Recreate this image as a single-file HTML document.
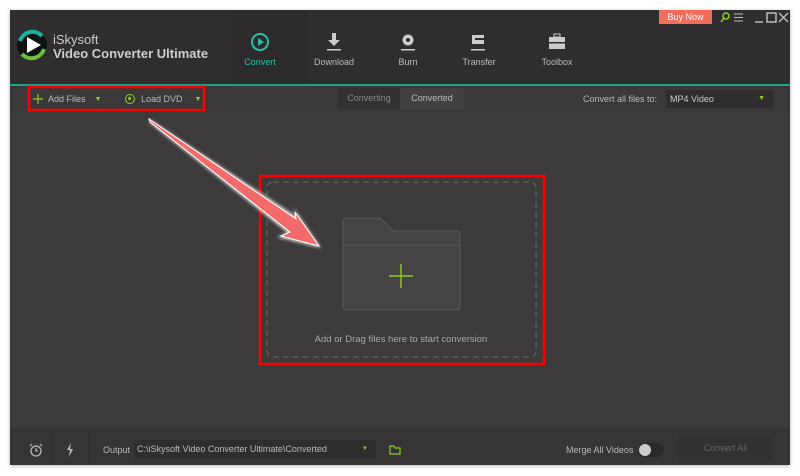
<!DOCTYPE html>
<html><head><meta charset="utf-8"><style>
*{margin:0;padding:0;box-sizing:border-box}
body{width:800px;height:476px;background:#fff;position:relative;overflow:hidden;font-family:"Liberation Sans",sans-serif}
.win{position:absolute;left:10px;top:10px;width:780px;height:455px;background:#3c3a3b;box-shadow:0 1px 4px rgba(0,0,0,.3)}
.title{position:absolute;left:0;top:0;width:780px;height:74px;background:#2f2d2e}
.teal{position:absolute;left:0;top:74px;width:780px;height:2px;background:#1aa28a}
.tool{position:absolute;left:0;top:76px;width:780px;height:26px;background:#3a3839}
.abs{position:absolute}
.nav{position:absolute;top:0;width:74px;height:74px;text-align:center;color:#bbb;font-size:9px}
.nav span{position:absolute;left:0;right:0;top:47px}
.bottom{position:absolute;left:0;top:418px;width:780px;height:37px;background:#363435}
.ti{display:flex;align-items:center;height:26px;color:#bbb;font-size:9px}
</style></head><body>
<div class="win">
 <div class="title">
  <svg class="abs" style="left:4px;top:17px" width="36" height="36" viewBox="0 0 36 36">
   <circle cx="18" cy="18" r="15" fill="#111"/>
   <path d="M6 14 A13 13 0 0 1 28 9" stroke="#1bb3a0" stroke-width="4" fill="none"/>
   <path d="M30 22 A13 13 0 0 1 8 27" stroke="#6cbf3c" stroke-width="4" fill="none"/>
   <path d="M13 10 L27 18 L13 26Z" fill="#fff"/>
  </svg>
  <div class="abs" style="left:43px;top:22px;color:#ccc;font-size:13px">iSkysoft</div>
  <div class="abs" style="left:43px;top:36px;color:#ccc;font-size:13px;font-weight:bold">Video Converter Ultimate</div>
  <div class="abs" style="left:222px;top:0;width:76px;height:74px;background:#2c2a2b"></div>
  <div class="nav" style="left:213px;color:#27c0a5"><svg class="abs" style="left:27px;top:22px" width="20" height="20"><circle cx="10" cy="10" r="8" stroke="#27c0a5" stroke-width="2" fill="none"/><path d="M8 6 L14 10 L8 14Z" fill="#27c0a5"/></svg><span>Convert</span></div>
  <div class="nav" style="left:287px"><svg class="abs" style="left:30px;top:22px" width="14" height="20"><path d="M5 1h4v7h4l-6 6-6-6h4z" fill="#ccc"/><rect x="0" y="17" width="14" height="1.5" fill="#ccc"/></svg><span>Download</span></div>
  <div class="nav" style="left:361px"><svg class="abs" style="left:30px;top:24px" width="14" height="18"><circle cx="7" cy="6" r="5.5" fill="#ccc"/><circle cx="7" cy="6" r="2" fill="#2f2d2e"/><rect x="0" y="15" width="14" height="1.5" fill="#ccc"/></svg><span>Burn</span></div>
  <div class="nav" style="left:432px"><svg class="abs" style="left:29px;top:24px" width="18" height="18"><rect x="1" y="1" width="12" height="9" fill="#ccc"/><rect x="4" y="4" width="11" height="2" fill="#2f2d2e"/><rect x="0" y="15" width="14" height="1.5" fill="#ccc"/></svg><span>Transfer</span></div>
  <div class="nav" style="left:510px"><svg class="abs" style="left:28px;top:23px" width="18" height="18"><rect x="6" y="1" width="6" height="3" stroke="#ccc" fill="none"/><rect x="1" y="4" width="16" height="12" fill="#ccc"/><rect x="1" y="9" width="16" height="1.5" fill="#2f2d2e"/></svg><span>Toolbox</span></div>
  <div class="abs" style="left:649px;top:0;width:53px;height:14px;background:#f26b5b;color:#fff;font-size:9px;text-align:center;line-height:14px">Buy Now</div>
  <svg class="abs" style="left:709px;top:2px" width="70" height="12"><circle cx="7" cy="4" r="3" stroke="#8dcf1e" stroke-width="1.5" fill="none"/><path d="M5 6 L2 10" stroke="#8dcf1e" stroke-width="1.5"/><path d="M15 2h9M15 5.5h9M15 9h9" stroke="#bbb"/><path d="M36 10h8" stroke="#bbb" stroke-width="1.5"/><rect x="48" y="1" width="9" height="9" stroke="#bbb" stroke-width="1.5" fill="none"/><path d="M60 1l9 9M69 1l-9 9" stroke="#bbb" stroke-width="1.5"/></svg>
 </div>
 <div class="teal"></div>
 <div class="tool">
  <div class="abs ti" style="left:23px;top:0"><svg width="10" height="10" style="margin-right:5px"><path d="M5 0v10M0 5h10" stroke="#8dcf1e" stroke-width="1.2"/></svg>Add Files<span style="color:#8dcf1e;font-size:7px;margin-left:9px">▼</span></div>
  <div class="abs ti" style="left:115px;top:0"><span style="display:inline-block;width:10px;height:10px;border:1.5px solid #8dcf1e;border-radius:50%;margin-right:6px;position:relative"><span style="position:absolute;left:2px;top:2px;width:3px;height:3px;background:#8dcf1e;border-radius:50%"></span></span>Load DVD<span style="color:#8dcf1e;font-size:7px;margin-left:12px">▼</span></div>
  <div class="abs" style="left:328px;top:2px;width:62px;height:21px;background:#333132;color:#888;font-size:9px;line-height:21px;text-align:center">Converting</div>
  <div class="abs" style="left:390px;top:2px;width:64px;height:21px;background:#424041;color:#bbb;font-size:9px;line-height:21px;text-align:center">Converted</div>
  <div class="abs ti" style="left:573px;top:0">Convert all files to:</div>
  <div class="abs" style="left:656px;top:4px;width:107px;height:18px;background:#2f2d2e;color:#ccc;font-size:9px;line-height:18px;padding-left:4px">MP4 Video<span style="position:absolute;right:8px;color:#8dcf1e;font-size:7px">▼</span></div>
 </div>
 <div class="bottom">
  <svg class="abs" style="left:19px;top:15px" width="14" height="14"><circle cx="7" cy="8" r="5" stroke="#bbb" stroke-width="1.3" fill="none"/><path d="M7 5v3h2M1 3l2-2M13 3l-2-2" stroke="#bbb" stroke-width="1.2" fill="none"/></svg>
  <svg class="abs" style="left:56px;top:15px" width="8" height="14"><path d="M5 0L1 7h3l-1 7 4-8H4z" fill="#bbb"/></svg>
  <div class="abs" style="left:42px;top:6px;width:1px;height:28px;background:#2e2c2d"></div>
  <div class="abs" style="left:78px;top:6px;width:1px;height:28px;background:#2e2c2d"></div>
  <div class="abs" style="left:93px;top:17px;color:#bbb;font-size:9px">Output</div>
  <div class="abs" style="left:124px;top:12px;width:242px;height:18px;background:#2f2d2e;color:#bbb;font-size:9px;line-height:18px;padding-left:3px">C:\iSkysoft Video Converter Ultimate\Converted<span style="position:absolute;right:8px;color:#8dcf1e;font-size:6px">▼</span></div>
  <svg class="abs" style="left:379px;top:17px" width="12" height="10"><path d="M1 1h4l1 2h5v6H1z" stroke="#8dcf1e" stroke-width="1.2" fill="none"/></svg>
  <div class="abs" style="left:556px;top:17px;color:#bbb;font-size:9px">Merge All Videos</div>
  <div class="abs" style="left:628px;top:15px;width:26px;height:14px;background:#2a2829;border-radius:7px"></div>
  <div class="abs" style="left:629px;top:16px;width:12px;height:12px;background:#ccc;border-radius:50%"></div>
  <div class="abs" style="left:668px;top:7px;width:95px;height:27px;background:#333132;color:#666;font-size:9px;line-height:27px;text-align:center">Convert All</div>
 </div>
</div>
<svg class="abs" style="left:0;top:0" width="800" height="476">
 <defs><filter id="g"><feGaussianBlur stdDeviation="1.5"/></filter></defs>
 <rect x="29" y="87" width="175" height="23" fill="none" stroke="#f00" stroke-width="2.5"/>
 <rect x="260" y="176" width="284" height="188" fill="none" stroke="#f00" stroke-width="2.5"/>
 <rect x="267" y="182" width="269" height="175" rx="6" fill="none" stroke="#6a6869" stroke-width="1" stroke-dasharray="6,4"/>
 <path d="M343 222 q0-4 4-4 h33 l14 13 h62 q4 0 4 4 v71 q0 4 -4 4 h-109 q-4 0 -4-4z" fill="#464445" stroke="#5a5859" stroke-width="1"/>
 <path d="M343 245 h117" stroke="#5a5859"/>
 <path d="M389 276 h24 M401 264 v24" stroke="#9ae21a" stroke-width="1.2"/>
 <text x="401" y="342" fill="#aaa" font-size="9.5" text-anchor="middle" font-family="Liberation Sans, sans-serif">Add or Drag files here to start conversion</text>
 <g>
  <path d="M149 119 L297 217 L293 207 L321 248 L277 237 L288 233 L150 123Z" fill="#fff" filter="url(#g)" opacity=".8"/>
  <path d="M149 119 L296 219 L295 212 L319 246 L281 236 L290 232 L150 122Z" fill="#f26a6a" stroke="#fff" stroke-width="1"/>
 </g>
</svg>
</body></html>
